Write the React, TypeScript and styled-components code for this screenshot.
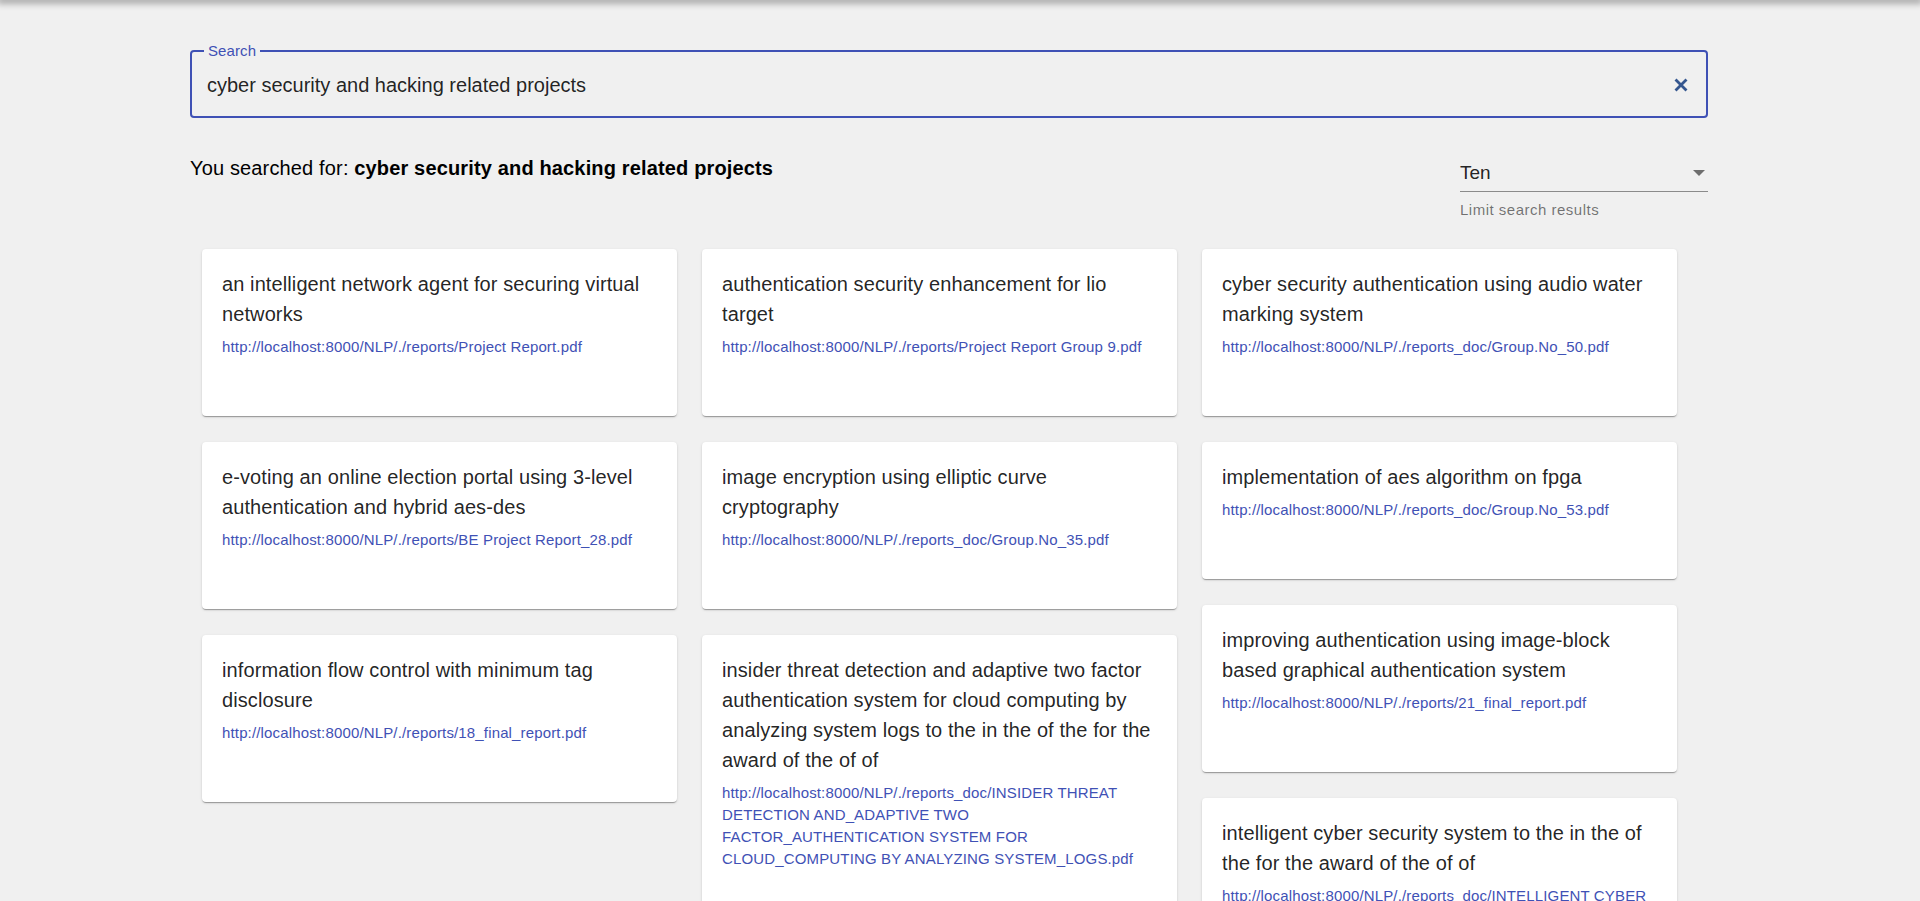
import React from "react";
import styled, { createGlobalStyle } from "styled-components";

const GlobalStyle = createGlobalStyle`
    html, body {
        margin: 0;
        padding: 0;
        background: #f0f0f0;
        font-family: "Liberation Sans", Arial, Helvetica, sans-serif;
        color: rgba(0, 0, 0, 0.87);
    }

    ::-webkit-scrollbar {
        width: 17px;
    }

    ::-webkit-scrollbar-track {
        background: #f1f1f1;
    }

    ::-webkit-scrollbar-thumb {
        background: #c1c1c1;
        border: 17px solid transparent;
        border-width: 17px 0;
        background-clip: padding-box;
    }
`;

const TopShadow = styled.div`
    height: 0;
    box-shadow: 0 0 7px 3px rgba(0, 0, 0, 0.38);
`;

const Page = styled.div`
    padding: 42px 0 40px 190px;
`;

const Container = styled.div`
    width: 1518px;
`;

const SearchBox = styled.fieldset`
    margin: 0;
    padding: 13px 18px 19px 15px;
    border: 2px solid #3f51b5;
    border-radius: 4px;
    min-width: 0;
`;

const SearchLabel = styled.legend`
    margin-left: -3px;
    padding: 0 4px;
    font-size: 15px;
    line-height: 18px;
    color: #3f51b5;
    letter-spacing: 0.1px;
`;

const SearchRow = styled.div`
    display: flex;
    align-items: center;
    gap: 12px;
`;

const SearchInput = styled.input`
    flex: 1;
    height: 24px;
    padding: 0;
    border: none;
    outline: none;
    background: transparent;
    font-family: "Liberation Sans", Arial, sans-serif;
    font-size: 20px;
    line-height: 24px;
    color: rgba(0, 0, 0, 0.87);
    caret-color: #000;
`;

const ClearButton = styled.button`
    display: flex;
    padding: 0;
    border: none;
    background: none;
    cursor: pointer;
`;

const ResultsHeader = styled.div`
    display: flex;
    justify-content: space-between;
    align-items: flex-start;
    margin-top: 35px;
`;

const SearchedFor = styled.div`
    font-size: 20px;
    line-height: 30px;
    letter-spacing: 0.15px;
    color: #000;

    strong {
        font-weight: bold;
    }
`;

const SelectWrap = styled.div`
    width: 248px;
    display: flex;
    flex-direction: column;
`;

const SelectControl = styled.div`
    display: flex;
    align-items: center;
    justify-content: space-between;
    padding: 8px 3px 6px 0;
    border-bottom: 1px solid rgba(0, 0, 0, 0.42);
    font-size: 19px;
    line-height: 24px;
    color: rgba(0, 0, 0, 0.87);
    cursor: pointer;
`;

const HelperText = styled.div`
    margin-top: 8px;
    font-size: 15px;
    line-height: 20px;
    letter-spacing: 0.5px;
    color: rgba(0, 0, 0, 0.54);
`;

const Columns = styled.div`
    display: flex;
    align-items: flex-start;
    gap: 25px;
    margin-top: 29px;
    padding-left: 12px;
`;

const Column = styled.div`
    width: 475px;
    display: flex;
    flex-direction: column;
    gap: 26px;
`;

const Card = styled.div`
    background: #fff;
    border-radius: 4px;
    padding: 20px 20px 58px;
    box-shadow: 0 2px 1px -1px rgba(0, 0, 0, 0.2), 0 1px 1px 0 rgba(0, 0, 0, 0.14), 0 1px 3px 0 rgba(0, 0, 0, 0.12);
`;

const CardTitle = styled.div`
    font-size: 20px;
    line-height: 30px;
    letter-spacing: 0.1px;
    color: rgba(0, 0, 0, 0.87);
    margin-bottom: 7px;
`;

const CardLink = styled.a`
    display: block;
    font-size: 15px;
    line-height: 22px;
    letter-spacing: 0.15px;
    color: #3f51b5;
    text-decoration: none;
`;

type Result = { title: string; url: string };

const base = "http://localhost:8000/NLP/./";

const columns: Result[][] = [
    [
        { title: "an intelligent network agent for securing virtual networks", url: base + "reports/Project Report.pdf" },
        { title: "e-voting an online election portal using 3-level authentication and hybrid aes-des", url: base + "reports/BE Project Report_28.pdf" },
        { title: "information flow control with minimum tag disclosure", url: base + "reports/18_final_report.pdf" },
    ],
    [
        { title: "authentication security enhancement for lio target", url: base + "reports/Project Report Group 9.pdf" },
        { title: "image encryption using elliptic curve cryptography", url: base + "reports_doc/Group.No_35.pdf" },
        {
            title: "insider threat detection and adaptive two factor authentication system for cloud computing by analyzing system logs to the in the of the for the award of the of of",
            url: base + "reports_doc/INSIDER THREAT DETECTION AND_ADAPTIVE TWO FACTOR_AUTHENTICATION SYSTEM FOR CLOUD_COMPUTING BY ANALYZING SYSTEM_LOGS.pdf",
        },
    ],
    [
        { title: "cyber security authentication using audio water marking system", url: base + "reports_doc/Group.No_50.pdf" },
        { title: "implementation of aes algorithm on fpga", url: base + "reports_doc/Group.No_53.pdf" },
        { title: "improving authentication using image-block based graphical authentication system", url: base + "reports/21_final_report.pdf" },
        { title: "intelligent cyber security system to the in the of the for the award of the of of", url: base + "reports_doc/INTELLIGENT CYBER SECURITY SYSTEM.pdf" },
    ],
];

const query = "cyber security and hacking related projects";

const ClearIcon = () => (
    <svg width="14" height="14" viewBox="0 0 14 14">
        <path d="M2.5 2.5 L11.5 11.5 M11.5 2.5 L2.5 11.5" stroke="#34568f" strokeWidth="2.8" strokeLinecap="square" fill="none" />
    </svg>
);

const DropArrow = () => (
    <svg width="12" height="6" viewBox="0 0 12 6">
        <path d="M0 0 L12 0 L6 6 Z" fill="rgba(0,0,0,0.54)" />
    </svg>
);

const App = () => {
    return (
        <>
            <GlobalStyle />
            <TopShadow />
            <Page>
                <Container>
                    <SearchBox>
                        <SearchLabel>Search</SearchLabel>
                        <SearchRow>
                            <SearchInput defaultValue={query} autoFocus />
                            <ClearButton aria-label="clear">
                                <ClearIcon />
                            </ClearButton>
                        </SearchRow>
                    </SearchBox>

                    <ResultsHeader>
                        <SearchedFor>
                            You searched for: <strong>{query}</strong>
                        </SearchedFor>
                        <SelectWrap>
                            <SelectControl>
                                <span>Ten</span>
                                <DropArrow />
                            </SelectControl>
                            <HelperText>Limit search results</HelperText>
                        </SelectWrap>
                    </ResultsHeader>

                    <Columns>
                        {columns.map((col, i) => (
                            <Column key={i}>
                                {col.map((r) => (
                                    <Card key={r.url}>
                                        <CardTitle>{r.title}</CardTitle>
                                        <CardLink href={r.url}>{r.url}</CardLink>
                                    </Card>
                                ))}
                            </Column>
                        ))}
                    </Columns>
                </Container>
            </Page>
        </>
    );
};

export default App;
